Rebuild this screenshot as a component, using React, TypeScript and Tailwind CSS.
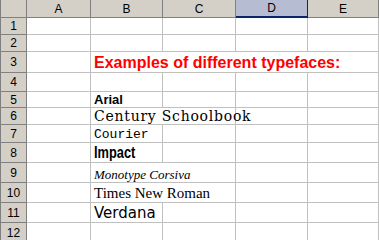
import React from 'react';

const cols = ['A', 'B', 'C', 'D', 'E'];

type Row = { h: string; text?: string; span?: number; cls?: string };

const rows: Row[] = [
  { h: 'h-[17px]' },
  { h: 'h-[17px]' },
  {
    h: 'h-[21px]',
    text: 'Examples of different typefaces:',
    span: 4,
    cls: "font-['Liberation_Sans',sans-serif] font-bold text-[16px] text-[#ff0000]",
  },
  { h: 'h-[19px]' },
  { h: 'h-[16px]', text: 'Arial', cls: "font-['Liberation_Sans',sans-serif] font-bold text-[13px] text-black" },
  {
    h: 'h-[17px]',
    text: 'Century Schoolbook',
    span: 2,
    cls: "font-['DejaVu_Serif',serif] text-[14px] tracking-[0.75px] text-black",
  },
  { h: 'h-[18px]', text: 'Courier', cls: "font-['Liberation_Mono',monospace] text-[13px] text-black" },
  {
    h: 'h-[20px]',
    text: 'Impact',
    cls: "font-['Liberation_Sans',sans-serif] font-bold text-[16px] text-black",
  },
  {
    h: 'h-[20px]',
    text: 'Monotype Corsiva',
    span: 2,
    cls: "font-['Liberation_Serif',serif] italic text-[13px] text-black",
  },
  {
    h: 'h-[20px]',
    text: 'Times New Roman',
    span: 2,
    cls: "font-['Liberation_Serif',serif] text-[15px] text-black",
  },
  { h: 'h-[20px]', text: 'Verdana', cls: "font-['DejaVu_Sans',sans-serif] text-[15px] text-black" },
  { h: 'h-[20px]' },
];

const headCell = "flex items-center justify-center border-r border-b border-[#808080] bg-[#d4d0c8] text-[12px] text-black font-['Liberation_Sans',sans-serif]";

export default function App() {
  return (
    <div className="w-[379px] h-[240px] overflow-hidden bg-white">
      <div className="grid grid-cols-[27px_64px_72px_73px_72px_71px]">
        {/* column headers */}
        <div className={`${headCell} h-[18px] border-l`}></div>
        {cols.map((c) =>
          c === 'D' ? (
            <div
              key={c}
              className="flex items-center justify-center h-[18px] bg-[#b6bdd2] border-r border-b-2 border-[#0a246a] text-[12px] text-black font-['Liberation_Sans',sans-serif]"
            >
              {c}
            </div>
          ) : (
            <div key={c} className={`${headCell} h-[18px]`}>
              {c}
            </div>
          )
        )}

        {rows.map((r, i) => {
          const n = i + 1;
          const span = r.span ?? 1;
          const empties = r.text ? 5 - 1 - span : 5;
          return (
            <React.Fragment key={n}>
              <div className={`${headCell} ${r.h} border-l`}>{n}</div>
              {r.text && (
                <>
                  <div className={`${r.h} border-r border-b border-[#c0c0c0]`}></div>
                  <div
                    className={`${r.h} ${
                      span === 4 ? 'col-span-4' : span === 2 ? 'col-span-2' : ''
                    } flex items-end pl-[3px] pb-px border-r border-b border-[#c0c0c0] whitespace-nowrap leading-none ${r.cls}`}
                  >
                    {r.text === 'Impact' ? (
                      <span className="inline-block origin-left scale-x-[0.8]">{r.text}</span>
                    ) : (
                      r.text
                    )}
                  </div>
                </>
              )}
              {Array.from({ length: empties }).map((_, j) => (
                <div key={j} className={`${r.h} border-r border-b border-[#c0c0c0]`}></div>
              ))}
            </React.Fragment>
          );
        })}
      </div>
    </div>
  );
}
